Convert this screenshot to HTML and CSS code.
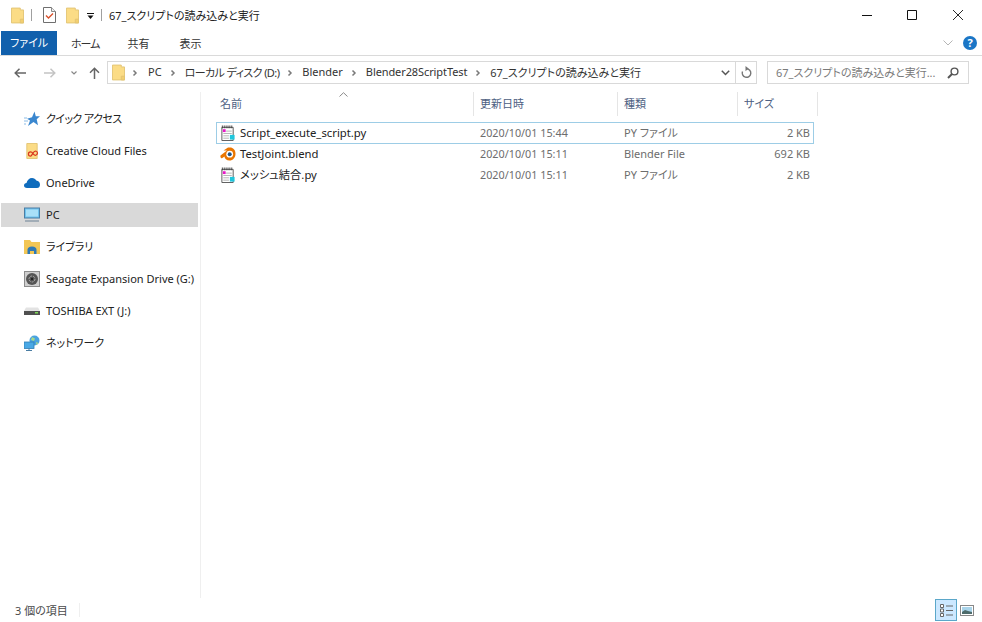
FILE: index.html
```html
<!DOCTYPE html>
<html lang="ja">
<head>
<meta charset="utf-8">
<title>67_スクリプトの読み込みと実行</title>
<link rel="stylesheet" href="styles.css">
</head>
<body>
<svg class="defs" width="0" height="0" aria-hidden="true">
  <defs>
    <symbol id="folder" viewBox="0 0 14 17">
      <path d="M.5.5h9.5v2h3.500v14H.5z" fill="#fbdc86" stroke="#e2c474"/>
      <path d="M10 16.500v-4h3.500v4z" fill="#f3cf70" stroke="#e2c474"/>
    </symbol>
    <symbol id="py" viewBox="0 0 16 17">
      <path d="M1.500 2.500h12v14h-12z" fill="#fff" stroke="#555"/>
      <path d="M2 .5v3M4 .5v3M6 .5v3M8 .5v3M10 .5v3M12 .5v3" stroke="#333" stroke-width=".9"/>
      <path d="M6 6.500h6M3 9h9M3 11.500h6M3 14h6" stroke="#b0b0b0"/>
      <rect x="2.500" y="4.500" width="3" height="3" fill="#e815c8"/>
      <rect x="10" y="10.500" width="5" height="5" fill="#1fc6dc"/>
    </symbol>
    <symbol id="chev" viewBox="0 0 6 8">
      <path d="M1.500 1.500 4 4 1.500 6.500" fill="none" stroke="#7a7a7a" stroke-width="1.500"/>
    </symbol>
  </defs>
</svg>
<div class="window">
  <header class="titlebar">
    <svg class="ic-folder"><use href="#folder"/></svg>
    <span class="qsep"></span>
    <svg class="ic-check" viewBox="0 0 13 16">
      <path d="M.5.500h8l4 4v11H.500z" fill="#fff" stroke="#6f6f6f"/>
      <path d="M8.500.500v4h4" fill="#eee" stroke="#8a8a8a"/>
      <path d="M3 8.500 5.500 11 10 6.500" fill="none" stroke="#d9512c" stroke-width="1.400"/>
    </svg>
    <svg class="ic-folder"><use href="#folder"/></svg>
    <svg class="ic-drop" viewBox="0 0 7 7">
      <path d="M0 .500h7" stroke="#111"/><path d="M.5 2.500h6L3.500 6z" fill="#111"/>
    </svg>
    <span class="qsep"></span>
    <span class="wintitle">67_スクリプトの読み込みと実行</span>
    <div class="winbtns">
      <svg viewBox="0 0 10 10"><path d="M0 5.500h10" stroke="#111"/></svg>
      <svg viewBox="0 0 10 10"><path d="M.5.500h9v9h-9z" fill="none" stroke="#111"/></svg>
      <svg viewBox="0 0 10 10"><path d="M0 0l10 10M10 0 0 10" stroke="#111" stroke-width=".9"/></svg>
    </div>
  </header>

  <nav class="ribbon">
    <span class="tab tab-file">ファイル</span>
    <span class="tab tab-home">ホーム</span>
    <span class="tab tab-share">共有</span>
    <span class="tab tab-view">表示</span>
    <svg class="rib-chev" viewBox="0 0 10 6"><path d="M.5.500 5 5 9.500.5" fill="none" stroke="#b5b5b5"/></svg>
    <svg class="help" viewBox="0 0 14 14"><circle cx="7" cy="7" r="7" fill="#1b76c6"/><text x="7" y="11" text-anchor="middle" class="helptext">?</text></svg>
  </nav>

  <div class="addressrow">
    <svg class="nav-back" viewBox="0 0 12 10"><path d="M5.500.7 1.200 5l4.300 4.300M1.200 5H12" fill="none" stroke="#666" stroke-width="1.500"/></svg>
    <svg class="nav-fwd" viewBox="0 0 12 10"><path d="M6.500.7 10.800 5 6.500 9.300M10.800 5H0" fill="none" stroke="#c4c4c4" stroke-width="1.500"/></svg>
    <svg class="nav-down" viewBox="0 0 6 4"><path d="M.5.500 3 3 5.500.5" fill="none" stroke="#888" stroke-width="1.200"/></svg>
    <svg class="nav-up" viewBox="0 0 11 12"><path d="M1 5.700 5.500 1.200 10 5.700M5.500 1.200V12" fill="none" stroke="#666" stroke-width="1.500"/></svg>
    <div class="addressbox">
      <svg class="addr-folder"><use href="#folder"/></svg>
      <svg class="crumb-chev"><use href="#chev"/></svg><span class="crumb">PC</span>
      <svg class="crumb-chev"><use href="#chev"/></svg><span class="crumb crumb-disk">ローカル ディスク (D:)</span>
      <svg class="crumb-chev"><use href="#chev"/></svg><span class="crumb">Blender</span>
      <svg class="crumb-chev"><use href="#chev"/></svg><span class="crumb crumb-script">Blender28ScriptTest</span>
      <svg class="crumb-chev"><use href="#chev"/></svg><span class="crumb">67_スクリプトの読み込みと実行</span>
      <svg class="addr-down" viewBox="0 0 9 6"><path d="M.8.800 4.500 4.500 8.200.8" fill="none" stroke="#555" stroke-width="1.500"/></svg>
      <span class="addr-sep"></span>
      <svg class="addr-refresh" viewBox="0 0 12 13"><path d="M6.500 2.700a4.300 4.300 0 1 1-4 2.700" fill="none" stroke="#777" stroke-width="1.400"/><path d="M5.500 0v5.200L8.600 2.600z" fill="#777"/></svg>
    </div>
    <div class="searchbox">
      <span class="searchtext">67_スクリプトの読み込みと実行...</span>
      <svg class="searchicon" viewBox="0 0 12 12"><circle cx="7.500" cy="4.500" r="3.400" fill="none" stroke="#555" stroke-width="1.400"/><path d="M5 7 1 11" stroke="#555" stroke-width="2"/></svg>
    </div>
  </div>

  <div class="main">
    <aside class="sidebar">
      <div class="side-item">
        <svg class="side-ic" viewBox="0 0 16 16"><path d="M10.500.5l1.300 4.700H16l-3.300 3 1.300 6-4.500-3.200L4 15l2-5.500-3-1.800 5-1.500z" fill="#3a87cf"/><path d="M0 7h3M0 10h4M0 13h2" stroke="#8bbce6"/></svg>
        <span class="tight">クイック アクセス</span>
      </div>
      <div class="side-item">
        <svg class="side-ic" viewBox="0 0 16 17">
          <path d="M2.500.5h11v16h-11z" fill="#fbdc86" stroke="#e2c474"/>
          <path d="M6.500 14a2.300 2.300 0 0 1 0-4.600c1.500 0 2.200 1.300 3 2.300s1.400 1.500 2.500 1.300a2.300 2.300 0 0 0 0-4.500c-1.500 0-2.300 1.200-3 2.200s-1.500 3.300-2.500 3.300z" fill="none" stroke="#d9361f" stroke-width="1.300"/>
        </svg>
        <span>Creative Cloud Files</span>
      </div>
      <div class="side-item">
        <svg class="side-ic" viewBox="0 0 16 11"><path d="M3 10.500C1 10.500 0 9.300 0 8c0-1.400 1-2.400 2.500-2.500C3.200 2.500 5.300.5 8 .5c2 0 3.500 1 4.300 2.600C14.500 3.300 16 5 16 7.200c0 2-1.300 3.300-3 3.300z" fill="#0f6cbd"/></svg>
        <span>OneDrive</span>
      </div>
      <div class="side-item active">
        <svg class="side-ic" viewBox="0 0 16 15"><rect x=".5" y=".5" width="15" height="10" fill="#6fc3ee" stroke="#4a7da3"/><rect x="2" y="2" width="12" height="7" fill="#a9e0f8"/><path d="M1 13.500h14" stroke="#8a9aa8" stroke-width="1.400"/></svg>
        <span>PC</span>
      </div>
      <div class="side-item">
        <svg class="side-ic" viewBox="0 0 16 14"><path d="M0 0h6l1.500 2H16v12H0z" fill="#f2c655"/><path d="M3.500 14V9.500C3.500 8 5 6.500 8 6.500s4.500 1.500 4.500 3V14h-2.500v-3H6v3z" fill="#2f79b5"/></svg>
        <span>ライブラリ</span>
      </div>
      <div class="side-item">
        <svg class="side-ic" viewBox="0 0 16 16"><rect x=".5" y=".5" width="15" height="15" fill="#cfcfcf" stroke="#8c8c8c"/><circle cx="8" cy="8" r="6" fill="#555"/><circle cx="8" cy="8" r="3" fill="none" stroke="#aaa" stroke-dasharray="2 1"/><circle cx="8" cy="8" r="1.200" fill="#222"/></svg>
        <span>Seagate Expansion Drive (G:)</span>
      </div>
      <div class="side-item">
        <svg class="side-ic" viewBox="0 0 16 8"><path d="M2 .5h12L16 4v4H0V4z" fill="#e3e3e3"/><rect y="4" width="16" height="4" fill="#4f4f4f"/><rect x="11" y="5" width="3" height="1.500" fill="#7ed957"/></svg>
        <span>TOSHIBA EXT (J:)</span>
      </div>
      <div class="side-item">
        <svg class="side-ic" viewBox="0 0 16 16"><circle cx="10.500" cy="5.500" r="5" fill="#4aa3e0"/><path d="M8 2l3 1.500-1 2.500-3-1zM12 7l2.500 1-2 2z" fill="#a7d98a"/><rect x="0" y="7" width="10" height="6.500" fill="#49a8e5" stroke="#2f7db5" stroke-width=".8"/><path d="M5 13.500v2M2 15.500h6" stroke="#4a7da3"/></svg>
        <span>ネットワーク</span>
      </div>
    </aside>

    <section class="content">
      <div class="listhead">
        <svg class="sortmark" viewBox="0 0 9 5"><path d="M.5 4.500 4.500.7l4 3.800" fill="none" stroke="#8a8a8a"/></svg>
        <div class="hcell col-name">名前</div>
        <div class="hcell col-date">更新日時</div>
        <div class="hcell col-type">種類</div>
        <div class="hcell col-size">サイズ</div>
      </div>
      <div class="rows">
        <div class="row selected">
          <div class="cell col-name name"><svg class="file-ic"><use href="#py"/></svg>Script_execute_script.py</div>
          <div class="cell col-date">2020/10/01 15:44</div>
          <div class="cell col-type">PY ファイル</div>
          <div class="cell col-size size">2 KB</div>
        </div>
        <div class="row">
          <div class="cell col-name name">
            <svg class="file-ic" viewBox="0 0 16 14"><path d="M.5 8.500 7 3.500H3.500L8 .5h2c3 0 5.500 2.300 5.500 6.200S13 13.500 9.500 13.500c-3 0-5-2-5-4L2 11.200C1 12 0 9.200.5 8.500z" fill="#ea7600"/><circle cx="9.700" cy="7.200" r="3.400" fill="#fff"/><circle cx="9.700" cy="7.200" r="2" fill="#265787"/></svg>TestJoint.blend
          </div>
          <div class="cell col-date">2020/10/01 15:11</div>
          <div class="cell col-type">Blender File</div>
          <div class="cell col-size size">692 KB</div>
        </div>
        <div class="row">
          <div class="cell col-name name"><svg class="file-ic"><use href="#py"/></svg>メッシュ結合.py</div>
          <div class="cell col-date">2020/10/01 15:11</div>
          <div class="cell col-type">PY ファイル</div>
          <div class="cell col-size size">2 KB</div>
        </div>
      </div>
    </section>
  </div>

  <footer class="statusbar">
    <span class="count">3 個の項目</span>
    <span class="status-sep"></span>
    <div class="viewbtns">
      <span class="viewbtn on">
        <svg viewBox="0 0 15 15"><path d="M1.500 1.500h3v3h-3zM1.500 6h3v3h-3zM1.500 10.500h3v3h-3z" fill="#fff" stroke="#666"/><path d="M7 3h7M7 7.500h7M7 12h7" stroke="#666"/></svg>
      </span>
      <svg class="viewpic" viewBox="0 0 14 11"><rect x=".5" y=".5" width="13" height="10" fill="#fff" stroke="#888"/><rect x="2" y="2" width="10" height="7" fill="#a9d4ea"/><path d="M2 7l3-2 3 1 4 1v2H2z" fill="#4d6b6b"/></svg>
    </div>
  </footer>
</div>
</body>
</html>
```

FILE: styles.css
```css
* { box-sizing: border-box; }
html, body { margin: 0; padding: 0; background: #fff; }
body {
  font-family: "Noto Sans", "Noto Sans CJK JP", sans-serif;
  font-size: 11px;
  font-feature-settings: "palt";
  color: #1e1e1e;
  overflow: hidden;
}
.defs { display: block; height: 0; }
.window { width: 982px; height: 622px; display: flex; flex-direction: column; }

.titlebar { height: 31px; display: flex; align-items: center; padding: 0 0 1px 11px; flex: none; }
.ic-folder { width: 13px; height: 17px; flex: none; }
.qsep { width: 1px; height: 12px; background: #a0a0a0; margin: 0 7px; flex: none; }
.ic-check { width: 13px; height: 16px; margin: 0 10px 0 4px; flex: none; }
.ic-drop { width: 7px; height: 7px; margin: 2px 0 0 8px; flex: none; }
.wintitle { color: #222; white-space: nowrap; }
.winbtns { margin-left: auto; display: flex; gap: 35px; padding-right: 19px; }
.winbtns svg { width: 10px; height: 10px; display: block; }
.winbtns svg:last-child { margin-left: 1px; }

.ribbon { height: 25px; flex: none; display: flex; align-items: center; border-bottom: 1px solid #dadada; }
.tab { color: #333; white-space: nowrap; }
.tab-file { background: #1160ac; color: #fff; width: 56px; height: 24px; margin-left: 1px; line-height: 24px; text-align: center; }
.tab-home { margin-left: 14px; letter-spacing: -1px; }
.tab-share { margin-left: 28px; }
.tab-view { margin-left: 30px; }
.rib-chev { width: 10px; height: 6px; margin-left: auto; flex: none; }
.help { width: 14px; height: 14px; margin: 0 5px 0 10px; flex: none; }
.helptext { font-size: 11px; font-weight: 700; fill: #fff; }

.addressrow { height: 36px; flex: none; display: flex; align-items: center; padding: 0 13px 3px 14px; }
.nav-back, .nav-fwd { width: 12px; height: 10px; flex: none; }
.nav-fwd { margin-left: 18px; }
.nav-down { width: 6px; height: 4px; margin-left: 15px; flex: none; }
.nav-up { width: 11px; height: 12px; margin-left: 12px; flex: none; }
.addressbox {
  margin-left: 7px; width: 650px; height: 23px; flex: none;
  border: 1px solid #d9d9d9; display: flex; align-items: center; padding-left: 4px;
}
.addr-folder { width: 13px; height: 17px; flex: none; }
.crumb-chev { width: 6px; height: 8px; flex: none; margin: 0 9px 0 8px; }
.addr-folder + .crumb-chev { margin: 0 10px 0 7px; }
.crumb { white-space: nowrap; color: #333; padding-bottom: 2px; }
.crumb-disk { letter-spacing: -.6px; }
.crumb-script { letter-spacing: -.1px; }
.addr-down { width: 9px; height: 6px; margin-left: auto; flex: none; }
.addr-sep { width: 1px; height: 21px; background: #d9d9d9; margin-left: 5px; flex: none; }
.addr-refresh { width: 12px; height: 13px; margin: 0 4px 0 4px; flex: none; }
.searchbox {
  margin-left: 10px; width: 202px; height: 23px; flex: none;
  border: 1px solid #d9d9d9; display: flex; align-items: center; padding: 0 9px 0 8px;
}
.searchtext { color: #7a7a7a; white-space: nowrap; padding-bottom: 2px; }
.searchicon { width: 12px; height: 12px; margin-left: auto; flex: none; }

.main { flex: 1; display: flex; min-height: 0; }
.sidebar { width: 201px; flex: none; border-right: 1px solid #efefef; padding: 15px 2px 0 1px; display: flex; flex-direction: column; gap: 8px; }
.side-item { height: 24px; display: flex; align-items: center; padding-left: 23px; white-space: nowrap; color: #222; }
.side-item span { padding-bottom: 2px; }
.side-item .tight { letter-spacing: -.6px; }
.side-item.active { background: #d9d9d9; }
.side-ic { width: 16px; height: 16px; margin-right: 6px; flex: none; }

.content { flex: 1; padding-left: 15px; min-width: 0; }
.listhead { height: 24px; display: flex; position: relative; }
.sortmark { position: absolute; left: 123px; top: 0; width: 9px; height: 5px; }
.hcell { height: 100%; display: flex; align-items: center; padding: 0 0 2px 4px; color: #4d6082; border-right: 1px solid #e5e5e5; }
.hcell.col-date, .hcell.col-type, .hcell.col-size { padding-left: 6px; }
.col-name { width: 258px; }
.col-date { width: 144px; }
.col-type { width: 120px; }
.col-size { width: 80px; }
.rows { margin-top: 6px; width: 598px; }
.row { height: 20px; display: flex; align-items: center; border: 1px solid transparent; border-width: 0 1px; }
.row.selected { height: 22px; border: 1px solid #9dcde6; }
.cell { color: #6d6d6d; padding: 0 0 2px 5px; white-space: nowrap; }
.row:last-child .cell { padding-bottom: 0; }
.cell.col-date { font-size: 10.800px; }
.cell.name { color: #222; display: flex; align-items: center; padding-left: 3px; font-size: 11.300px; }
.cell.size { width: 71px; text-align: right; padding-right: 0; }
.file-ic { width: 16px; height: 16px; margin: 2px 4px 0 0; flex: none; }

.statusbar { height: 24px; flex: none; display: flex; align-items: center; padding: 0 8px 0 15px; color: #444; }
.count { color: #4a4a4a; padding-bottom: 1px; }
.status-sep { width: 1px; height: 14px; background: #efefef; margin-left: 11px; }
.viewbtns { margin-left: auto; display: flex; align-items: center; gap: 3px; }
.viewbtn { width: 22px; height: 22px; display: flex; align-items: center; justify-content: center; }
.viewbtn.on { background: #cce8ff; border: 1px solid #5ba7c9; }
.viewbtn svg { width: 15px; height: 15px; }
.viewpic { width: 14px; height: 11px; }
```
